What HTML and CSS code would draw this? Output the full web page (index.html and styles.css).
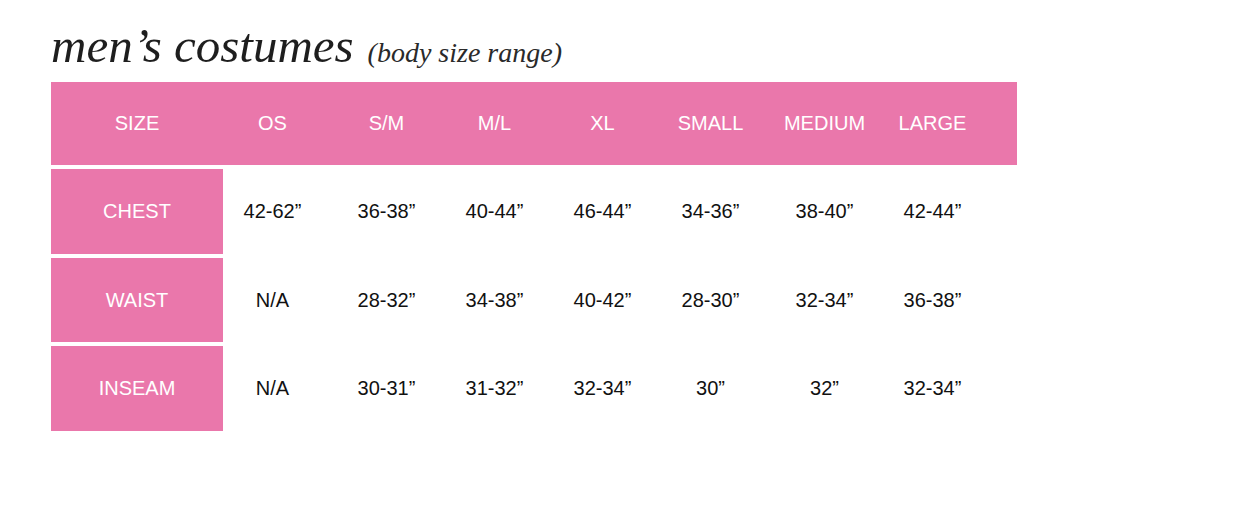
FILE: index.html
```html
<!DOCTYPE html>
<html>
<head>
<meta charset="utf-8">
<link rel="stylesheet" href="styles.css">
</head>
<body>
<div class="page">
  <div class="title">
    <h1 class="title-main">men’s costumes</h1>
    <span class="title-sub">(body size range)</span>
  </div>
  <div class="chart">
    <div class="row head">
      <div class="cell">SIZE</div>
      <div class="cell">OS</div>
      <div class="cell">S/M</div>
      <div class="cell">M/L</div>
      <div class="cell">XL</div>
      <div class="cell">SMALL</div>
      <div class="cell">MEDIUM</div>
      <div class="cell">LARGE</div>
      <div class="cell"></div>
    </div>
    <div class="row">
      <div class="cell label">CHEST</div>
      <div class="cell">42-62”</div>
      <div class="cell">36-38”</div>
      <div class="cell">40-44”</div>
      <div class="cell">46-44”</div>
      <div class="cell">34-36”</div>
      <div class="cell">38-40”</div>
      <div class="cell">42-44”</div>
      <div class="cell"></div>
    </div>
    <div class="row mid">
      <div class="cell label">WAIST</div>
      <div class="cell">N/A</div>
      <div class="cell">28-32”</div>
      <div class="cell">34-38”</div>
      <div class="cell">40-42”</div>
      <div class="cell">28-30”</div>
      <div class="cell">32-34”</div>
      <div class="cell">36-38”</div>
      <div class="cell"></div>
    </div>
    <div class="row">
      <div class="cell label">INSEAM</div>
      <div class="cell">N/A</div>
      <div class="cell">30-31”</div>
      <div class="cell">31-32”</div>
      <div class="cell">32-34”</div>
      <div class="cell">30”</div>
      <div class="cell">32”</div>
      <div class="cell">32-34”</div>
      <div class="cell"></div>
    </div>
  </div>
</div>
</body>
</html>
```
FILE: styles.css
```css
html, body {
  margin: 0;
  padding: 0;
  background: #ffffff;
}

.page {
  padding: 21px 0 0 51px;
  width: 966px;
}

.title {
  display: flex;
  align-items: baseline;
  gap: 14px;
  height: 49px;
  margin-bottom: 12px;
}

.title-main {
  margin: 0;
  font-family: "Liberation Serif", serif;
  font-style: italic;
  font-weight: normal;
  font-size: 49px;
  line-height: 49px;
  color: #1e1e1e;
}

.title-sub {
  font-family: "Liberation Serif", serif;
  font-style: italic;
  font-size: 28px;
  line-height: 28px;
  color: #2a2a2a;
}

.chart {
  display: flex;
  flex-direction: column;
  gap: 4px;
}

.row {
  display: grid;
  grid-template-columns: 172px 99px 129px 87px 129px 87px 141px 75px 47px;
  height: 85px;
  font-family: "Liberation Sans", Arial, sans-serif;
  font-size: 20px;
  color: #111111;
}

.row.head {
  height: 83px;
  background: #ea77ab;
  color: #ffffff;
}

.row.mid {
  height: 84px;
}

.cell {
  display: flex;
  align-items: center;
  justify-content: center;
}

.label {
  background: #ea77ab;
  color: #ffffff;
}
```
